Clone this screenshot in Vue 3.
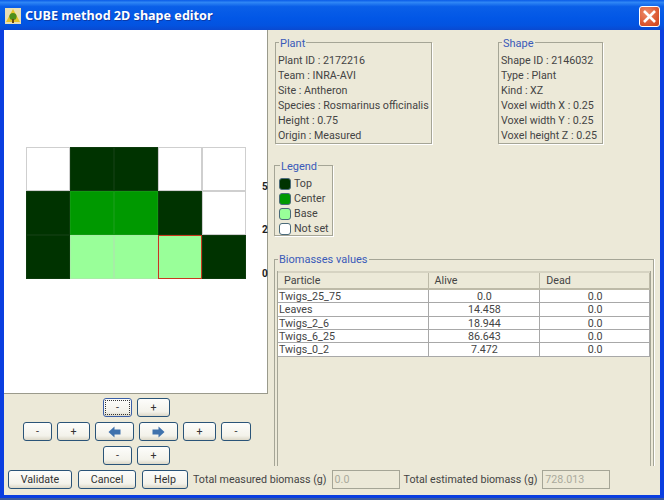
<template>
  <div class="window">
    <div class="titlebar">
      <svg class="app-icon" width="16" height="16" viewBox="0 0 16 16">
        <rect width="16" height="16" fill="#e9dfb4" />
        <path d="M8 1 L15 14 L1 14 Z" fill="#e6c52a" />
        <circle cx="8" cy="8.5" r="3.6" fill="#4f8f1c" />
        <rect x="7" y="11" width="2" height="4" fill="#6b4a12" />
      </svg>
      <span class="title">CUBE method 2D shape editor</span>
      <div class="close">
        <svg width="15" height="15" viewBox="0 0 15 15">
          <path d="M2 2 L13 13 M13 2 L2 13" stroke="#fff" stroke-width="2.6" />
        </svg>
      </div>
    </div>

    <div class="client">
      <div class="main">
        <div class="left">
          <div class="canvas">
            <div class="grid">
              <div
                v-for="(cell, i) in cells"
                :key="i"
                class="cell"
                :class="[cell.kind, { selected: cell.selected }]"
              ></div>
              <span class="tick t5">5</span>
              <span class="tick t2">2</span>
              <span class="tick t0">0</span>
            </div>
          </div>
          <div class="controls">
            <div class="ctl-row short">
              <button class="btn focus w29">-</button>
              <button class="btn w33">+</button>
            </div>
            <div class="ctl-row">
              <button class="btn w29">-</button>
              <button class="btn w33">+</button>
              <button class="btn w39">
                <svg width="13" height="12" viewBox="0 0 13 12"><path d="M0.5 6 L6.5 0.5 L6.5 3.5 L12.5 3.5 L12.5 8.5 L6.5 8.5 L6.5 11.5 Z" fill="#3f72ad" /></svg>
              </button>
              <button class="btn w39">
                <svg width="13" height="12" viewBox="0 0 13 12"><path d="M12.5 6 L6.5 0.5 L6.5 3.5 L0.5 3.5 L0.5 8.5 L6.5 8.5 L6.5 11.5 Z" fill="#3f72ad" /></svg>
              </button>
              <button class="btn w33">+</button>
              <button class="btn w30">-</button>
            </div>
            <div class="ctl-row short">
              <button class="btn w29">-</button>
              <button class="btn w33">+</button>
            </div>
          </div>
        </div>

        <div class="right">
          <div class="top-groups">
            <fieldset class="group plant">
              <legend>Plant</legend>
              <div v-for="line in plantInfo" :key="line" class="line">{{ line }}</div>
            </fieldset>
            <fieldset class="group shape">
              <legend>Shape</legend>
              <div v-for="line in shapeInfo" :key="line" class="line">{{ line }}</div>
            </fieldset>
          </div>

          <fieldset class="group legend-box">
            <legend>Legend</legend>
            <div v-for="item in legendItems" :key="item.label" class="legend-row">
              <span class="swatch" :class="item.kind"></span>{{ item.label }}
            </div>
          </fieldset>

          <fieldset class="group biomass">
            <legend>Biomasses values</legend>
            <div class="table">
              <div class="thead">
                <div class="th c1">Particle</div>
                <div class="th c2">Alive</div>
                <div class="th c3">Dead</div>
              </div>
              <div v-for="row in rows" :key="row.name" class="tr">
                <div class="td c1">{{ row.name }}</div>
                <div class="td c2 num">{{ row.alive }}</div>
                <div class="td c3 num">{{ row.dead }}</div>
              </div>
            </div>
          </fieldset>
        </div>
      </div>

      <div class="footer">
        <button class="btn fbtn w64">Validate</button>
        <button class="btn fbtn w58">Cancel</button>
        <button class="btn fbtn help w46">Help</button>
        <span class="flabel">Total measured biomass (g)</span>
        <div class="field">0.0</div>
        <span class="flabel">Total estimated biomass (g)</span>
        <div class="field">728.013</div>
      </div>
    </div>
  </div>
</template>

<script setup>
const layout = [
  ['empty', 'top', 'top', 'empty', 'empty'],
  ['top', 'center', 'center', 'top', 'empty'],
  ['top', 'base', 'base', 'base', 'top']
]

const cells = layout.flatMap((row, r) =>
  row.map((kind, c) => ({ kind, selected: r === 2 && c === 3 }))
)

const plantInfo = [
  'Plant ID : 2172216',
  'Team : INRA-AVI',
  'Site : Antheron',
  'Species : Rosmarinus officinalis',
  'Height : 0.75',
  'Origin : Measured'
]

const shapeInfo = [
  'Shape ID : 2146032',
  'Type : Plant',
  'Kind : XZ',
  'Voxel width X : 0.25',
  'Voxel width Y : 0.25',
  'Voxel height Z : 0.25'
]

const legendItems = [
  { label: 'Top', kind: 'top' },
  { label: 'Center', kind: 'center' },
  { label: 'Base', kind: 'base' },
  { label: 'Not set', kind: 'empty' }
]

const rows = [
  { name: 'Twigs_25_75', alive: '0.0', dead: '0.0' },
  { name: 'Leaves', alive: '14.458', dead: '0.0' },
  { name: 'Twigs_2_6', alive: '18.944', dead: '0.0' },
  { name: 'Twigs_6_25', alive: '86.643', dead: '0.0' },
  { name: 'Twigs_0_2', alive: '7.472', dead: '0.0' }
]
</script>

<style>
html,
body {
  margin: 0;
  background: #3c5a9c;
}
</style>

<style scoped>
.window {
  width: 664px;
  height: 498px;
  display: flex;
  flex-direction: column;
  font-family: Roboto, "Noto Sans", sans-serif;
  font-size: 10.7px;
  color: #444;
  background: #0a3ee0;
  overflow: hidden;
}

.titlebar {
  height: 30px;
  flex: none;
  display: flex;
  align-items: center;
  padding: 0 4px 0 5px;
  background: linear-gradient(#0a5be8 0%, #2f86f5 8%, #0a5fe8 22%, #0257e6 60%, #0353e0 85%, #0a49d0 100%);
}

.app-icon {
  flex: none;
  margin-top: 1px;
}

.title {
  margin-left: 4px;
  font-family: "Noto Sans", sans-serif;
  font-size: 12.6px;
  font-weight: bold;
  color: #fff;
  text-shadow: 1px 1px 0 #0b3aa8;
}

.close {
  width: 21px;
  height: 21px;
  margin-left: auto;
  margin-top: 2px;
  box-sizing: border-box;
  display: flex;
  align-items: center;
  justify-content: center;
  border: 1px solid #fff;
  border-radius: 3px;
  background: radial-gradient(circle at 35% 30%, #ee8a68, #d9532c 70%, #c8421c);
}

.client {
  flex: 1;
  margin: 0 4px 3px;
  display: flex;
  flex-direction: column;
  background: #ece9d8;
  min-height: 0;
}

.main {
  flex: 1;
  display: flex;
  min-height: 0;
}

.left {
  width: 264px;
  flex: none;
}

.canvas {
  height: 364px;
  box-sizing: border-box;
  background: #fff;
  padding: 117px 0 0 22px;
  border-right: 1px solid #9a9a8c;
  border-bottom: 1px solid #9a9a8c;
}

.grid {
  position: relative;
  width: 220px;
  display: grid;
  grid-template-columns: repeat(5, 44px);
  grid-auto-rows: 44px;
}

.cell {
  box-sizing: border-box;
  border: 1px solid #cfcfcf;
}

.cell.top {
  background: #003300;
  border-color: #0c3a0c;
}

.cell.center {
  background: #009900;
  border-color: #0f9c0f;
}

.cell.base {
  background: #99ff99;
  border-color: #a6eea6;
}

.cell.empty {
  background: #fff;
}

.cell.selected {
  border-color: #c8381c;
}

.tick {
  position: absolute;
  left: 236px;
  font-size: 10px;
  font-weight: bold;
  line-height: 12px;
  color: #222;
}

.t5 {
  top: 34px;
}

.t2 {
  top: 77px;
}

.t0 {
  top: 121px;
}

.controls {
  padding-top: 4px;
  display: flex;
  flex-direction: column;
  gap: 5px;
}

.ctl-row {
  display: flex;
  gap: 5px;
  padding-left: 19px;
}

.ctl-row.short {
  padding-left: 99px;
}

.btn {
  height: 19px;
  padding: 0;
  box-sizing: border-box;
  display: flex;
  align-items: center;
  justify-content: center;
  font-family: Roboto, "Noto Sans", sans-serif;
  font-size: 10.7px;
  color: #333;
  border: 1px solid #2a5478;
  border-radius: 3px;
  background: linear-gradient(#fdfdfb, #f3f2ea 75%, #dcd8c8);
}

.btn.focus {
  border-color: #3a5fa8;
  outline: 1px dotted #333;
  outline-offset: -3px;
}

.w29 { width: 29px; }
.w30 { width: 30px; }
.w33 { width: 33px; }
.w39 { width: 39px; }
.w46 { width: 46px; }
.w58 { width: 58px; }
.w64 { width: 64px; }

.right {
  flex: 1;
  min-width: 0;
  padding: 5px 6px 0 6px;
  display: flex;
  flex-direction: column;
}

.top-groups {
  display: flex;
}

.group {
  margin: 0;
  padding: 0 0 0 2px;
  box-sizing: border-box;
  border: 1px solid #a5a596;
  box-shadow: 1px 1px 0 #fff;
  min-width: 0;
}

.group legend {
  position: relative;
  top: 2px;
  padding: 0 1px;
  margin-left: 1px;
  font-size: 11px;
  line-height: 14px;
  color: #3a5ab8;
}

.biomass legend {
  top: 1px;
}

.line {
  line-height: 15px;
  white-space: nowrap;
  position: relative;
  top: 4px;
}

.plant {
  width: 157px;
  height: 109px;
  margin-left: 1px;
}

.shape {
  width: 105px;
  height: 109px;
  margin-left: 66px;
}

.legend-box {
  width: 59px;
  height: 78px;
  margin-top: 14px;
  padding: 4px 0 0 4px;
}

.legend-row {
  display: flex;
  align-items: center;
  gap: 3px;
  height: 15px;
  white-space: nowrap;
}

.swatch {
  width: 12px;
  height: 12px;
  flex: none;
  box-sizing: border-box;
  border: 1px solid #4a6a7a;
  border-radius: 3px;
}

.swatch.top { background: #003300; }
.swatch.center { background: #009900; }
.swatch.base { background: #99ff99; }
.swatch.empty { background: #fff; }

.biomass {
  width: 380px;
  height: 214px;
  margin-top: 16px;
  padding: 0 2px;
  border-bottom: none;
  box-shadow: 1px 0 0 #fff;
}

.table {
  margin-top: 5px;
  height: 195px;
  box-sizing: border-box;
  border-left: 1px solid #a5a596;
  border-right: 1px solid #a5a596;
}

.thead {
  display: flex;
  height: 19px;
  background: #ece9d8;
  border-bottom: 2px solid #bdbaa8;
  box-sizing: border-box;
  border-top: 2px solid #d6d3c2;
}

.th {
  line-height: 15px;
  padding-left: 6px;
  box-sizing: border-box;
  border-right: 1px solid #bdbaa8;
}

.tr {
  display: flex;
  height: 13.35px;
  background: #fff;
  border-bottom: 1px solid #a8a8a8;
  box-sizing: border-box;
}

.td {
  line-height: 13px;
  padding-left: 1px;
  box-sizing: border-box;
  border-right: 1px solid #a8a8a8;
  white-space: nowrap;
}

.num {
  text-align: center;
}

.c1 {
  width: 151px;
}

.c2 {
  width: 112px;
}

.c3 {
  width: 110px;
}

.footer {
  height: 28px;
  flex: none;
  display: flex;
  align-items: flex-start;
  padding: 3px 0 0 4px;
  box-sizing: border-box;
}

.fbtn {
  margin-right: 6px;
}

.fbtn.help {
  margin-right: 5px;
}

.flabel {
  line-height: 19px;
  white-space: nowrap;
  margin-right: 5px;
}

.field {
  width: 68px;
  height: 19px;
  box-sizing: border-box;
  margin-right: 4px;
  padding-left: 2px;
  border: 1px solid #a5a596;
  line-height: 17px;
  color: #aaa99c;
}
</style>
